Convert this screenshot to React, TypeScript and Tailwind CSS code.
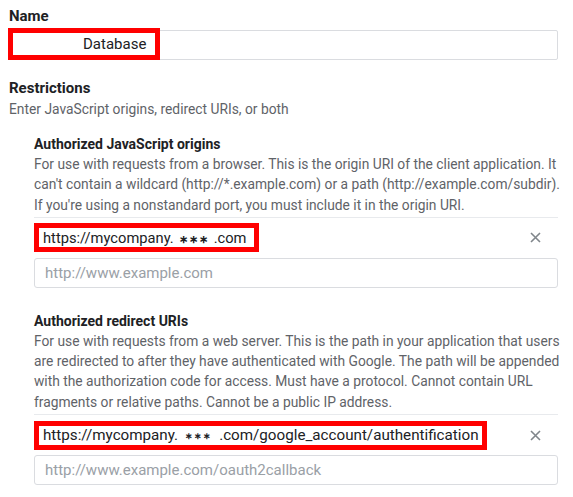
function RemoveIcon() {
  return (
    <svg width="11" height="11" viewBox="0 0 11 11" className="text-[#80868b]">
      <path d="M1 1 L10 10 M10 1 L1 10" stroke="currentColor" strokeWidth="1.6" />
    </svg>
  );
}

function UriRow({ children, width, size }: { children: React.ReactNode; width: string; size: string }) {
  return (
    <div className="flex h-[41px] items-center justify-between border-t border-[#e8eaed] pr-[17px]">
      <span
        className={`flex h-[29px] items-center whitespace-nowrap border-[5px] border-[#ff0000] pl-[4px] text-[#202124] ${size} ${width}`}
      >
        {children}
      </span>
      <RemoveIcon />
    </div>
  );
}

function Placeholder({ text }: { text: string }) {
  return (
    <div className="flex h-[30px] items-center rounded-[3px] border border-[#dadce0] px-[10px] text-[15px] text-[#9aa0a6]">
      {text}
    </div>
  );
}

function Lines({ lines }: { lines: string[] }) {
  return (
    <p className="mt-[3px] text-[13.8px] leading-[20.3px] text-[#5f6368]">
      {lines.map((l) => (
        <span key={l} className="block whitespace-nowrap">
          {l}
        </span>
      ))}
    </p>
  );
}

export default function App() {
  return (
    <div className="h-[497px] w-[573px] overflow-hidden bg-white pl-[9px] pr-[15px] pt-[6px] font-['Roboto',sans-serif]">
      <div className="text-[15px] font-bold leading-[20px] text-[#202124]">Name</div>
      <div className="relative mt-[4px] h-[30px] rounded-[2px] border border-[#dadce0]">
        <span className="absolute left-[-2px] top-[-3px] flex h-[32px] w-[152px] items-center border-[5px] border-[#ff0000] bg-white pl-[70px] text-[15px] text-[#202124]">
          Database
        </span>
      </div>

      <div className="mt-[18px] text-[15px] font-bold leading-[20px] text-[#202124]">Restrictions</div>
      <p className="mt-[1px] text-[13.8px] leading-[20px] text-[#5f6368]">
        Enter JavaScript origins, redirect URIs, or both
      </p>

      <div className="pl-[25px]">
        {/* JavaScript origins */}
        <div className="mt-[18px] text-[14px] font-bold leading-[14px] text-[#202124]">
          Authorized JavaScript origins
        </div>
        <Lines
          lines={[
            "For use with requests from a browser. This is the origin URI of the client application. It",
            "can't contain a wildcard (http://*.example.com) or a path (http://example.com/subdir).",
            "If you're using a nonstandard port, you must include it in the origin URI.",
          ]}
        />
        <div className="mt-[2px]">
          <UriRow width="w-[225px]" size="text-[14.7px]">
            https://mycompany.
            <span className="mx-[5px] mt-[5px] text-[11px] font-bold tracking-[1px]">∗∗∗</span>
            .com
          </UriRow>
          <Placeholder text="http://www.example.com" />
        </div>

        {/* Redirect URIs */}
        <div className="mt-[26px] text-[14px] font-bold leading-[14px] text-[#202124]">
          Authorized redirect URIs
        </div>
        <Lines
          lines={[
            "For use with requests from a web server. This is the path in your application that users",
            "are redirected to after they have authenticated with Google. The path will be appended",
            "with the authorization code for access. Must have a protocol. Cannot contain URL",
            "fragments or relative paths. Cannot be a public IP address.",
          ]}
        />
        <div className="mt-[2px]">
          <UriRow width="w-[453px]" size="text-[15.2px]">
            https://mycompany.
            <span className="mx-[7px] mt-[3px] text-[9px] font-bold tracking-[1px]">∗∗∗</span>
            .com/google_account/authentification
          </UriRow>
          <Placeholder text="http://www.example.com/oauth2callback" />
        </div>
      </div>
    </div>
  );
}
